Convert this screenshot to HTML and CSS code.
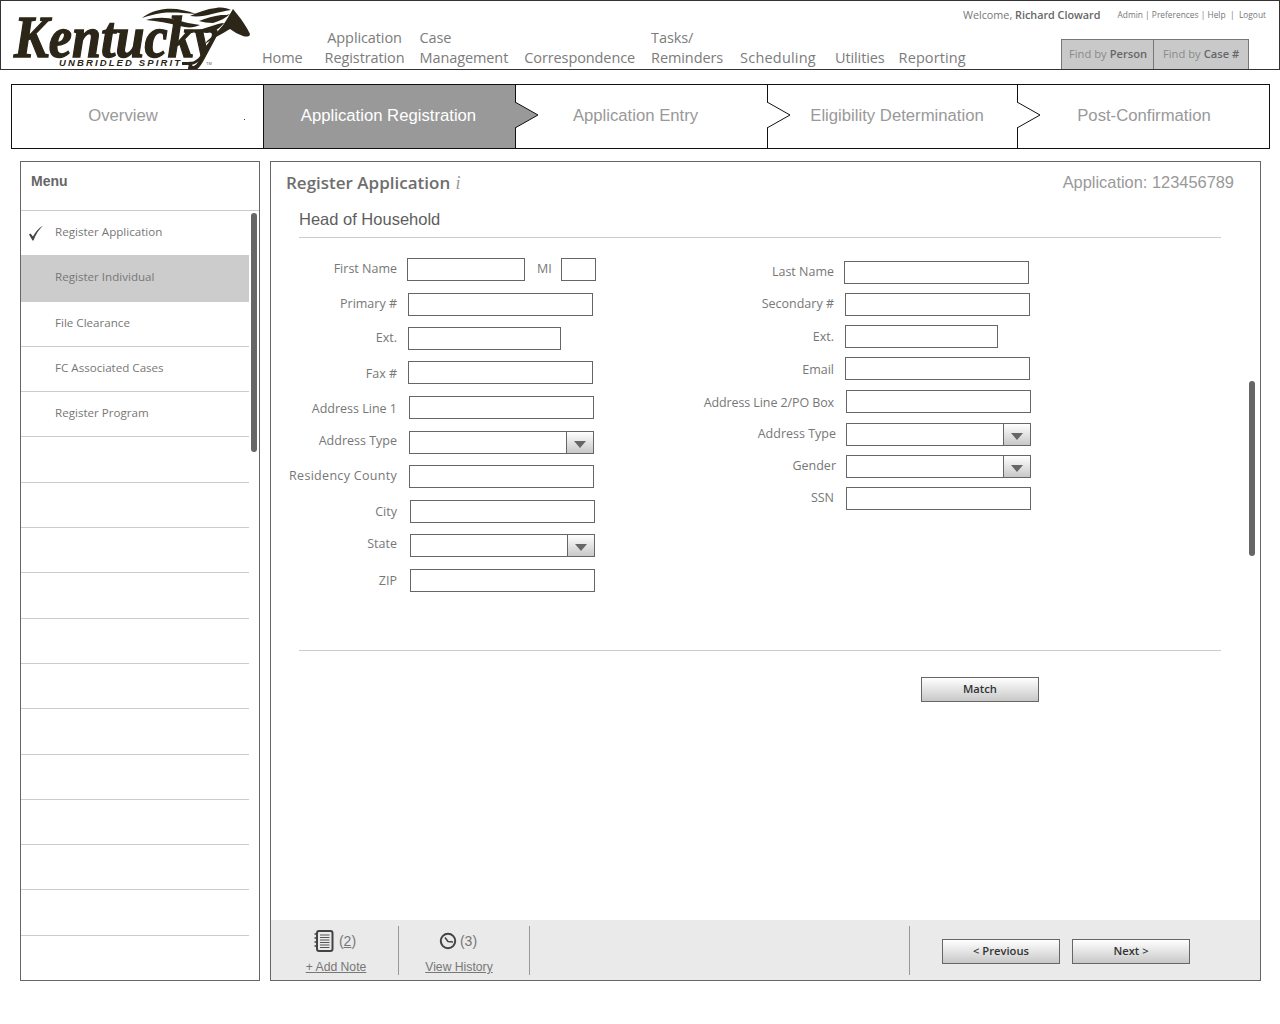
FILE: index.html
```html
<!DOCTYPE html>
<html lang="en">
<head>
<meta charset="utf-8">
<title>Register Application</title>
<link rel="stylesheet" href="styles.css">
</head>
<body>
<header class="top">
  <svg class="logo" width="250" height="68" viewBox="0 0 250 68" aria-label="Kentucky Unbridled Spirit">
    <text class="logo-word" x="14" y="56" textLength="203" lengthAdjust="spacingAndGlyphs">Kentucky</text>
    <text class="logo-tag" x="59" y="65" textLength="121" lengthAdjust="spacing">UNBRIDLED SPIRIT</text>
    <path class="logo-ink" d="M182 61H191C197 60 201 55 203 49L209 41L206 50C203 58 197 63 191 64H182Z"/>
    <path class="logo-ink" d="M207 40C214 34 222 27 227 18L233 8L237 13C243 20 247 27 250 33C250 36 246 36 243 35C238 33 234 31 230 28C226 30 222 33 216 36C212 38 209 40 205 43Z"/>
    <path class="logo-ink" d="M142 17C148 12 156 9 165 8C175 7 186 9 196 13C184 12 172 11 162 12C154 13 148 15 142 17Z"/>
    <path class="logo-ink" d="M146 19C156 16 167 16 176 19C184 21 192 23 200 24C194 27 187 27 180 25C169 22 157 20 146 19Z"/>
    <path class="logo-ink" d="M190 15C198 11 207 8 216 7C222 6 227 7 231 9C225 10 219 11 212 13C205 15 198 16 190 15Z"/>
    <path class="logo-ink" d="M199 20C206 17 214 15 221 14C225 14 228 14 230 13C226 17 220 20 213 22C208 22 203 21 199 20Z"/>
    <path class="logo-ink" d="M196 30C203 28 211 25 218 23C221 22 223 22 224 22C221 26 215 31 207 32C203 32 199 31 196 30Z"/>
    <text class="logo-tm" x="206" y="64">TM</text>
  </svg>
  <nav class="nav">
    <a class="nav-home">Home</a>
    <a class="nav-app">Application<br>Registration</a>
    <a class="nav-case">Case<br>Management</a>
    <a class="nav-corr">Correspondence</a>
    <a class="nav-task">Tasks/<br>Reminders</a>
    <a class="nav-sched">Scheduling</a>
    <a class="nav-util">Utilities</a>
    <a class="nav-rep">Reporting</a>
  </nav>
  <div class="top-right">
    <div class="account">
      <span class="welcome">Welcome, <b>Richard Cloward</b></span>
      <span class="links">Admin | Preferences | Help &nbsp;|&nbsp; Logout</span>
    </div>
    <div class="finders">
      <span class="finder finder-person">Find by <b>Person</b></span>
      <span class="finder finder-case">Find by <b>Case #</b></span>
    </div>
  </div>
</header>

<div class="steps">
  <div class="step step-1">Overview<i class="speck"></i></div>
  <div class="step step-2 active">Application Registration
    <svg class="chev" width="25" height="27" viewBox="0 0 25 27"><path class="chev-fill" d="M0 0L23 13L0 26Z"/><path class="chev-line" d="M0 0L23 13L0 26"/></svg>
  </div>
  <div class="step step-3">Application Entry
    <svg class="chev" width="25" height="27" viewBox="0 0 25 27"><path class="chev-blank" d="M0 0L23 13L0 26Z"/><path class="chev-line" d="M0 0L23 13L0 26"/></svg>
  </div>
  <div class="step step-4">Eligibility Determination
    <svg class="chev" width="25" height="27" viewBox="0 0 25 27"><path class="chev-blank" d="M0 0L23 13L0 26Z"/><path class="chev-line" d="M0 0L23 13L0 26"/></svg>
  </div>
  <div class="step step-5">Post-Confirmation</div>
</div>

<div class="work">
  <aside class="menu">
    <h2 class="menu-title">Menu</h2>
    <ul class="menu-list">
      <li class="menu-row">
        <svg class="check" width="16" height="16" viewBox="0 0 16 16"><path d="M1 9.500L2.500 8.500L5 11.500C7 7.500 10.500 3 15 .5C11 4.500 7.500 9.500 5.500 15.500H4.500Z"/></svg>
        Register Application</li>
      <li class="menu-row selected">Register Individual</li>
      <li class="menu-row">File Clearance</li>
      <li class="menu-row">FC Associated Cases</li>
      <li class="menu-row">Register Program</li>
      <li class="menu-row"></li><li class="menu-row"></li><li class="menu-row"></li>
      <li class="menu-row"></li><li class="menu-row"></li><li class="menu-row"></li>
      <li class="menu-row"></li><li class="menu-row"></li><li class="menu-row"></li>
      <li class="menu-row"></li><li class="menu-row"></li>
    </ul>
    <span class="scroll scroll-menu"></span>
  </aside>

  <main class="panel">
    <div class="panel-head">
      <h1 class="panel-title">Register Application <i class="info">i</i></h1>
      <span class="app-no">Application: 123456789</span>
    </div>
    <h2 class="section">Head of Household</h2>

    <div class="form">
      <div class="col col-left">
        <div class="row">
          <label class="lab up1">First Name</label><span class="box w118 off10"></span>
          <label class="mi up1">MI</label><span class="box w35"></span>
        </div>
        <div class="row g12"><label class="lab up1">Primary #</label><span class="box w185 off11"></span></div>
        <div class="row g11"><label class="lab up1">Ext.</label><span class="box w153 off11"></span></div>
        <div class="row g11"><label class="lab">Fax #</label><span class="box w185 off11"></span></div>
        <div class="row g12"><label class="lab">Address Line 1</label><span class="box w185 off12"></span></div>
        <div class="row g12"><label class="lab up2">Address Type</label><span class="box w185 off12 sel"><i class="sel-btn"></i></span></div>
        <div class="row g11"><label class="lab up1 roomy">Residency County</label><span class="box w185 off12"></span></div>
        <div class="row g12"><label class="lab flat">City</label><span class="box w185 off13"></span></div>
        <div class="row g11"><label class="lab up2">State</label><span class="box w185 off13 sel"><i class="sel-btn"></i></span></div>
        <div class="row g12"><label class="lab flat">ZIP</label><span class="box w185 off13"></span></div>
      </div>
      <div class="col col-right">
        <div class="row"><label class="lab up1">Last Name</label><span class="box w185 off10"></span></div>
        <div class="row g9"><label class="lab up1">Secondary #</label><span class="box w185 off11"></span></div>
        <div class="row g9"><label class="lab flat">Ext.</label><span class="box w153 off11"></span></div>
        <div class="row g9"><label class="lab">Email</label><span class="box w185 off11"></span></div>
        <div class="row g10"><label class="lab tight">Address Line 2/PO Box</label><span class="box w185 off12"></span></div>
        <div class="row g10"><label class="lab wide up1">Address Type</label><span class="box w185 off10 sel"><i class="sel-btn"></i></span></div>
        <div class="row g9"><label class="lab wide up1">Gender</label><span class="box w185 off10 sel"><i class="sel-btn"></i></span></div>
        <div class="row g9"><label class="lab up1">SSN</label><span class="box w185 off12"></span></div>
      </div>
    </div>

    <div class="match-row"><button class="btn">Match</button></div>

    <footer class="foot">
      <div class="foot-group notes">
        <div class="foot-top">
          <svg class="ico" width="20" height="22" viewBox="0 0 20 22"><rect class="ico-book" x="3" y="1" width="15.500" height="20" rx="2"/><path class="ico-rule" d="M6 5H15.500M6 7.500H15.500M6 10H15.500M6 12.500H15.500M6 15H15.500M6 17.500H15.500"/><path class="ico-ring" d="M.5 4H3M.5 8H3M.5 12H3M.5 16H3"/></svg>
          <span class="count">(<u>2</u>)</span>
        </div>
        <a class="foot-link">+ Add Note</a>
      </div>
      <div class="foot-group history">
        <div class="foot-top">
          <svg class="ico" width="18" height="18" viewBox="0 0 18 18"><circle class="ico-clock" cx="9" cy="9" r="7.200"/><path class="ico-hand" d="M6 5.500L9 9.500L14 10"/></svg>
          <span class="count">(3)</span>
        </div>
        <a class="foot-link">View History</a>
      </div>
      <div class="foot-nav">
        <button class="btn">&lt; Previous</button>
        <button class="btn">Next &gt;</button>
      </div>
    </footer>
    <span class="scroll scroll-main"></span>
  </main>
</div>
</body>
</html>
```
FILE: styles.css
```css
* { box-sizing: border-box; }
html, body { margin: 0; padding: 0; background: #fff; }
body { width: 1280px; height: 1024px; overflow: hidden; font-family: "Open Sans", "Liberation Sans", sans-serif; color: #777; }
h1, h2, ul { margin: 0; padding: 0; font-weight: normal; }
ul { list-style: none; }

/* header */
.top { display: flex; height: 70px; border: 1px solid #333; }
.logo { flex: none; display: block; margin-left: -1px; }
.logo-word { font: italic bold 60px "Liberation Serif", serif; fill: #2b2617; stroke: #2b2617; stroke-width: 1.4px; }
.logo-tag { font: italic bold 9.500px "Liberation Sans", sans-serif; fill: #2b2617; }
.logo-ink { fill: #2b2617; }
.logo-tm { font: 4px "Liberation Sans", sans-serif; fill: #555; }

.nav { display: flex; align-items: flex-end; padding: 0 0 1px 12px; font-size: 14.500px; letter-spacing: -.1px; line-height: 19.500px; color: #7c7c7c; height: 67px; flex: none; white-space: nowrap; }
.nav a { display: block; }
.nav-app { text-align: center; margin-left: 22px; }
.nav-case { margin-left: 15px; }
.nav-corr { margin-left: 16px; }
.nav-task { margin-left: 16px; }
.nav-sched { margin-left: 17px; letter-spacing: .2px; }
.nav-util { margin-left: 19px; }
.nav-rep { margin-left: 14px; letter-spacing: .1px; }

.top-right { flex: 1; min-width: 0; display: flex; flex-direction: column; align-items: flex-end; white-space: nowrap; }
.account { display: flex; align-items: center; height: 27px; padding-right: 13px; }
.welcome { font-size: 10.800px; color: #777; }
.welcome b { font-weight: 600; color: #666; }
.links { font-size: 8.400px; margin-left: 17px; color: #777; }
.finders { display: flex; margin: 11px 30px 0 0; height: 30px; background: #c9c9c9; border: 1px solid #777; border-bottom: 0; }
.finder { display: flex; align-items: center; font-size: 11.200px; color: #8a8a8a; height: 100%; padding-bottom: 3px; }
.finder b { font-weight: 600; color: #666; margin-left: 3px; }
.finder-person { width: 92px; padding-left: 7px; border-right: 1px solid #777; }
.finder-case { width: 94px; padding-left: 9px; }

/* steps */
.steps { display: flex; height: 65px; margin: 14px 10px 0 11px; border: 1px solid #111; font: 16.700px "Liberation Sans", sans-serif; color: #999; }
.step { position: relative; display: flex; align-items: center; justify-content: center; padding-bottom: 1px; border-right: 1px solid #111; }
.step-1 { width: 252px; padding-bottom: 2px; padding-right: 29px; }
.step-2 { width: 252px; padding-right: 2px; }
.step-3 { width: 252px; padding-right: 12px; }
.step-4 { width: 250px; padding-left: 9px; padding-right: 0; }
.step-5 { flex: 1; border-right: 0; padding-right: 0; padding-left: 1px; }
.active { background: #999; color: #fff; }
.speck { position: absolute; left: 232px; top: 34px; width: 1px; height: 1px; background: #333; }
.chev { position: absolute; left: 251px; top: 17px; }
.step-4 .chev { left: 249px; }
.chev-fill { fill: #999; }
.chev-blank { fill: #fff; }
.chev-line { fill: none; stroke: #111; stroke-width: 1px; }

/* work area */
.work { display: flex; margin: 12px 0 0 20px; height: 820px; }
.menu { position: relative; width: 240px; border: 1px solid #666; display: flex; flex-direction: column; }
.menu-title { height: 49px; border-bottom: 1px solid #ccc; font: bold 14px "Liberation Sans", sans-serif; color: #666; padding: 11px 0 0 10px; }
.menu-list { margin-right: 10px; }
.menu-row { position: relative; height: 45.300px; border-bottom: 1px solid #ccc; padding: 13px 0 0 34px; font-size: 11.600px; line-height: 16px; color: #777; }
.selected { background: #ccc; }
.check { position: absolute; left: 7px; top: 14px; }
.check path { fill: #444; }
.scroll { position: absolute; width: 6px; background: #666; border-radius: 3px; }
.scroll-menu { left: 230px; top: 51px; height: 239px; }
.scroll-main { left: 978px; top: 219px; height: 175px; }

.panel { position: relative; width: 991px; margin-left: 10px; border: 1px solid #666; display: flex; flex-direction: column; }
.panel-head { display: flex; justify-content: space-between; align-items: center; height: 42px; padding: 0 26px 2px 15px; }
.panel-title { font-size: 17px; font-weight: 600; color: #6e6e6e; }
.info { font: italic 18px "Liberation Serif", serif; color: #999; margin-left: 1px; }
.app-no { font: 16.400px "Liberation Sans", sans-serif; color: #999; }
.section { height: 34px; margin: 0 39px 0 28px; border-bottom: 1px solid #ccc; font: 16.500px "Liberation Sans", sans-serif; color: #5e5e5e; padding-top: 6px; }

.form { display: flex; height: 412px; }
.col { display: flex; flex-direction: column; }
.col-left { width: 414px; margin-left: 15px; padding-top: 20px; }
.col-right { padding-top: 23px; }
.row { display: flex; align-items: center; height: 23px; flex: none; }
.g9 { margin-top: 9px; }
.g10 { margin-top: 10px; }
.g11 { margin-top: 11px; }
.g12 { margin-top: 12px; }
.lab { width: 111px; text-align: right; font-size: 12.500px; line-height: 16px; white-space: nowrap; color: #777; flex: none; padding-top: 2px; }
.col-right .lab { width: 134px; }
.col-right .lab.wide { width: 136px; }
.up1 { padding-top: 0; padding-bottom: 1px; }
.up2 { padding-top: 0; padding-bottom: 3px; }
.flat { padding-top: 0; }
.roomy { letter-spacing: .3px; }
.tight { letter-spacing: -.1px; }
.box { display: block; position: relative; height: 23px; border: 1px solid #666; background: #fff; flex: none; }
.w118 { width: 118px; }
.w35 { width: 35px; }
.w153 { width: 153px; }
.w185 { width: 185px; }
.off10 { margin-left: 10px; }
.off11 { margin-left: 11px; }
.off12 { margin-left: 12px; }
.off13 { margin-left: 13px; }
.mi { width: 36px; padding-left: 12px; font-size: 12.500px; line-height: 16px; color: #777; flex: none; }
.sel-btn { position: absolute; top: 0; right: 0; bottom: 0; width: 27px; border-left: 1px solid #666; background: linear-gradient(#fff, #c8c8c8); }
.sel-btn::after { content: ""; position: absolute; left: 7px; top: 9px; border: 6px solid transparent; border-top: 7px solid #666; border-bottom: 0; }

.match-row { margin: 0 39px 0 28px; padding: 26px 0 0 622px; border-top: 1px solid #ccc; }
.btn { display: block; width: 118px; height: 25px; padding: 0 0 2px; border: 1px solid #666; background: linear-gradient(#fff, #c8c8c8); font: 600 11.200px "Open Sans", "Liberation Sans", sans-serif; color: #333; }

.foot { display: flex; margin-top: auto; height: 60px; padding: 6px 0 5px; background: #eaeaea; font: 13px "Liberation Sans", sans-serif; color: #777; }
.foot-group { display: flex; flex-direction: column; align-items: center; border-right: 1px solid #999; padding-top: 4px; }
.notes { width: 128px; padding-left: 3px; }
.notes .foot-top { margin-left: -2px; }
.history { width: 131px; padding-right: 10px; }
.history .foot-top { gap: 3px; margin-left: -2px; }
.foot-top { display: flex; align-items: center; gap: 5px; height: 22px; }
.ico { display: block; flex: none; }
.ico-book { fill: #eaeaea; stroke: #444; stroke-width: 2px; }
.ico-rule { stroke: #555; stroke-width: 1px; fill: none; }
.ico-ring { stroke: #444; stroke-width: 1.500px; fill: none; }
.ico-clock { fill: #eaeaea; stroke: #444; stroke-width: 2px; }
.ico-hand { stroke: #444; stroke-width: 1.500px; fill: none; }
.count { font-size: 14px; }
.foot-link { font-size: 12.200px; margin-top: 8px; text-decoration: underline; }
.foot-nav { display: flex; gap: 12px; margin-left: auto; width: 351px; padding: 13px 0 0 32px; border-left: 1px solid #999; }
```
